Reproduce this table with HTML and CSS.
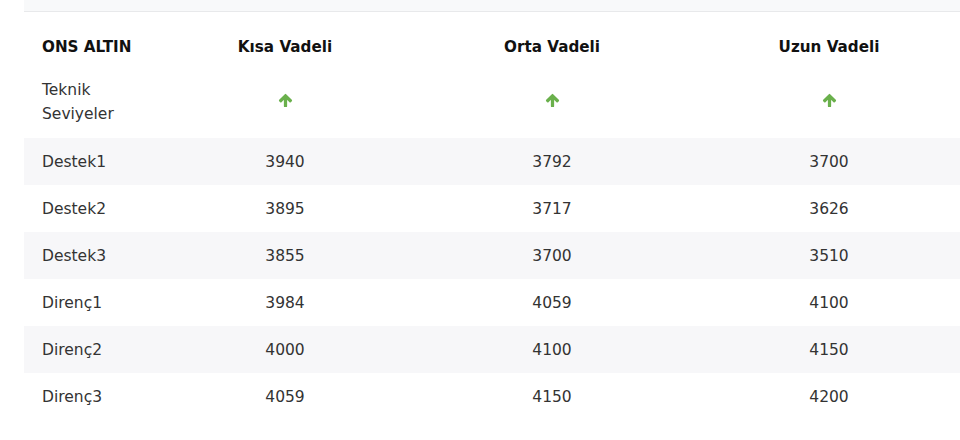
FILE: index.html
```html
<!DOCTYPE html>
<html lang="tr">
<head>
<meta charset="utf-8">
<link rel="stylesheet" href="styles.css">
</head>
<body>
<div class="page">
  <div class="topbar"></div>
  <div class="table">
    <div class="row head">
      <div class="c first">ONS ALTIN</div>
      <div class="c">Kısa Vadeli</div>
      <div class="c">Orta Vadeli</div>
      <div class="c">Uzun Vadeli</div>
    </div>
    <div class="row tech">
      <div class="c first">Teknik<br>Seviyeler</div>
      <div class="c"><svg class="arrow" viewBox="0 0 24 24"><path d="M4 12l1.41 1.41L11 7.83V20h2V7.83l5.58 5.59L20 12l-8-8-8 8z"/></svg></div>
      <div class="c"><svg class="arrow" viewBox="0 0 24 24"><path d="M4 12l1.41 1.41L11 7.83V20h2V7.83l5.58 5.59L20 12l-8-8-8 8z"/></svg></div>
      <div class="c"><svg class="arrow" viewBox="0 0 24 24"><path d="M4 12l1.41 1.41L11 7.83V20h2V7.83l5.58 5.59L20 12l-8-8-8 8z"/></svg></div>
    </div>
    <div class="row data alt"><div class="c first">Destek1</div><div class="c">3940</div><div class="c">3792</div><div class="c">3700</div></div>
    <div class="row data"><div class="c first">Destek2</div><div class="c">3895</div><div class="c">3717</div><div class="c">3626</div></div>
    <div class="row data alt"><div class="c first">Destek3</div><div class="c">3855</div><div class="c">3700</div><div class="c">3510</div></div>
    <div class="row data"><div class="c first">Direnç1</div><div class="c">3984</div><div class="c">4059</div><div class="c">4100</div></div>
    <div class="row data alt"><div class="c first">Direnç2</div><div class="c">4000</div><div class="c">4100</div><div class="c">4150</div></div>
    <div class="row data"><div class="c first">Direnç3</div><div class="c">4059</div><div class="c">4150</div><div class="c">4200</div></div>
  </div>
</div>
</body>
</html>
```

FILE: styles.css
```css
html, body {
  margin: 0;
  padding: 0;
  background: #ffffff;
}
body {
  font-family: "DejaVu Sans", "Noto Sans", sans-serif;
  font-size: 15.5px;
  color: #222222;
}
.page {
  padding-left: 24px;
  width: 936px;
  overflow: hidden;
}
.topbar {
  height: 11px;
  background: #f8f9fa;
  border-bottom: 1px solid #e8e9eb;
}
.table {
  margin-top: 12px;
}
.row {
  display: grid;
  grid-template-columns: 160px 202px 332px 222px 40px;
  align-items: center;
}
.c {
  text-align: center;
}
.c.first {
  text-align: left;
  padding-left: 18px;
}
.head {
  height: 46px;
  font-weight: 700;
  font-size: 15.2px;
  color: #111111;
}
.tech {
  height: 68px;
  padding-bottom: 4px;
  box-sizing: border-box;
  line-height: 24px;
  color: #333333;
}
.arrow {
  width: 17px;
  height: 17px;
  fill: #6ab04c;
  stroke: #6ab04c;
  stroke-width: 2.6;
  stroke-linejoin: round;
  display: block;
  margin: 0 auto 4px;
}
.data {
  height: 47px;
  color: #333333;
}
.alt {
  background: #f7f7f9;
}
```
